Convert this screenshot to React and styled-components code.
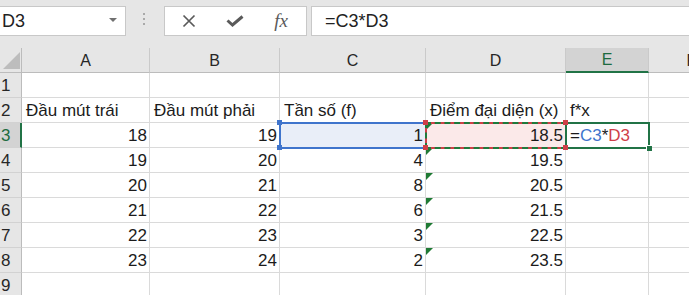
import React from 'react';
import styled, { createGlobalStyle } from 'styled-components';

const GlobalStyle = createGlobalStyle`
    html, body {
        margin: 0;
        padding: 0;
        background: #fff;
        overflow: hidden;
    }
    body {
        font-family: "Liberation Sans", Arial, sans-serif;
    }
`

const Window = styled.div`
    width: 689px;
    height: 295px;
    overflow: hidden;
    background: #fff;
    display: flex;
    flex-direction: column;
`

/* ---------- formula bar ---------- */

const Toolbar = styled.div`
    flex: none;
    height: 48px;
    box-sizing: border-box;
    padding-top: 6px;
    background: #e6e6e6;
    display: flex;
    align-items: flex-start;
`

const NameBox = styled.div`
    flex: none;
    width: 127px;
    height: 30px;
    margin-left: -1px;
    box-sizing: border-box;
    background: #fff;
    border: 1px solid #c8c8c8;
    display: flex;
    align-items: center;
    justify-content: space-between;
    padding: 0 8px 0 2px;
    font-size: 18px;
    color: #222;
`

const DropArrow = styled.span`
    width: 0;
    height: 0;
    border-left: 4px solid transparent;
    border-right: 4px solid transparent;
    border-top: 4px solid #707070;
    margin-top: -2px;
`

const Grip = styled.div`
    flex: none;
    margin: 7px 19px 0 17px;
    display: flex;
    flex-direction: column;
    gap: 3px;
`

const Dot = styled.span`
    width: 2px;
    height: 2px;
    background: #a9a9a9;
`

const ButtonBox = styled.div`
    flex: none;
    width: 143px;
    height: 30px;
    box-sizing: border-box;
    background: #fff;
    border: 1px solid #c8c8c8;
    display: flex;
    padding-left: 1px;
`

const IconSlot = styled.div`
    width: 46px;
    height: 28px;
    display: flex;
    align-items: center;
    justify-content: center;
    color: #5a5a5a;
`

const Fx = styled.span`
    font-family: "Liberation Serif", "Times New Roman", serif;
    font-style: italic;
    font-size: 19px;
    color: #5a5a5a;
    margin-top: -1px;
`

const FormulaInput = styled.div`
    flex: 1;
    height: 30px;
    margin-left: 4px;
    margin-right: -4px;
    box-sizing: border-box;
    background: #fff;
    border: 1px solid #c8c8c8;
    padding-left: 13px;
    display: flex;
    align-items: center;
    font-size: 18px;
    color: #222;
`

/* ---------- grid ---------- */

const Sheet = styled.div`
    display: grid;
    grid-template-columns: 22px 128px 130px 146px 140px 83px 86px;
    grid-auto-rows: 25px;
`

const Corner = styled.div`
    box-sizing: border-box;
    background: #e6e6e6;
    border-right: 1px solid #bcbcbc;
    border-bottom: 1px solid #bcbcbc;
`

const ColHead = styled.div`
    box-sizing: border-box;
    display: flex;
    align-items: center;
    justify-content: center;
    padding-top: 1px;
    font-size: 16px;
    background: ${p => p.$active ? '#d3d3d3' : '#e6e6e6'};
    color: ${p => p.$active ? '#1d6b3f' : '#262626'};
    border-right: 1px solid #cacaca;
    border-bottom: ${p => p.$active ? '2px solid #217346' : '1px solid #bcbcbc'};
`

const RowHead = styled.div`
    box-sizing: border-box;
    display: flex;
    align-items: flex-end;
    padding: 0 0 1px 1px;
    font-size: 17px;
    line-height: 20px;
    background: ${p => p.$active ? '#d3d3d3' : '#e6e6e6'};
    color: ${p => p.$active ? '#1d6b3f' : '#262626'};
    border-right: ${p => p.$active ? '2px solid #217346' : '1px solid #bcbcbc'};
    border-bottom: 1px solid #d2d2d2;
`

const Cell = styled.div`
    position: relative;
    box-sizing: border-box;
    display: flex;
    align-items: flex-end;
    justify-content: ${p => p.$num ? 'flex-end' : 'flex-start'};
    padding: 0 2px 1px 4px;
    font-size: 17px;
    line-height: 20px;
    color: #1b1b1b;
    white-space: nowrap;
    background: ${p => p.$fill || '#fff'};
    border-right: 1px solid #dadada;
    border-bottom: 1px solid #dadada;

    ${p => p.$flag && `
        &::before {
            content: "";
            position: absolute;
            top: 0;
            left: 0;
            width: 0;
            height: 0;
            border-top: 7px solid #1f7a34;
            border-right: 7px solid transparent;
            z-index: 1;
        }
    `}
`

const Frame = styled.span`
    position: absolute;
    z-index: 2;
    top: -1px;
    left: -1px;
    right: -2px;
    bottom: -2px;
    border: 2px ${p => p.$dashed ? 'dashed' : 'solid'} ${p => p.$color};
    pointer-events: none;
`

const Handle = styled.span`
    position: absolute;
    z-index: 3;
    width: 5px;
    height: 5px;
    background: ${p => p.$color};
    ${p => p.$v}: -3px;
    ${p => p.$h}: -3px;
`

const FillHandle = styled.span`
    position: absolute;
    z-index: 3;
    right: -4px;
    bottom: -4px;
    width: 5px;
    height: 5px;
    background: #217346;
    border-left: 1px solid #fff;
    border-top: 1px solid #fff;
`

const Ref = styled.span`
    color: ${p => p.$color};
`

const BLUE = '#3f74cc';
const RED = '#cf3f48';
const GREEN = '#217346';
const ANTS = '#1e7a3c';

const cols = ['A', 'B', 'C', 'D', 'E', 'F'];

const data = {
    2: ['Đầu mút trái', 'Đầu mút phải', 'Tần số (f)', 'Điểm đại diện (x)', 'f*x'],
    3: [18, 19, 1, 18.5],
    4: [19, 20, 4, 19.5],
    5: [20, 21, 8, 20.5],
    6: [21, 22, 6, 21.5],
    7: [22, 23, 3, 22.5],
    8: [23, 24, 2, 23.5],
};

const rows = [1, 2, 3, 4, 5, 6, 7, 8, 9];

const XIcon = () => (
    <svg width="14" height="14" viewBox="0 0 14 14">
        <path d="M1.5 1.5 L12.5 12.5 M12.5 1.5 L1.5 12.5" stroke="#5a5a5a" strokeWidth="1.7" fill="none" />
    </svg>
);

const CheckIcon = () => (
    <svg width="18" height="12" viewBox="0 0 18 12">
        <path d="M1.5 5.5 L6.5 10 L16.5 1.5" stroke="#5a5a5a" strokeWidth="3" fill="none" />
    </svg>
);

const CornerMark = () => (
    <svg width="21" height="24" viewBox="0 0 21 24">
        <polygon points="20,4 20,21 3,21" fill="#bdbdbd" />
    </svg>
);

const FormulaBar = () => (
    <Toolbar>
        <NameBox>
            <span>D3</span>
            <DropArrow />
        </NameBox>
        <Grip><Dot /><Dot /><Dot /></Grip>
        <ButtonBox>
            <IconSlot><XIcon /></IconSlot>
            <IconSlot><CheckIcon /></IconSlot>
            <IconSlot><Fx>fx</Fx></IconSlot>
        </ButtonBox>
        <FormulaInput>=C3*D3</FormulaInput>
    </Toolbar>
);

function renderCell(row, ci) {
    const key = cols[ci] + row;
    const v = data[row] ? data[row][ci] : undefined;
    const isNum = typeof v === 'number';
    const flag = ci === 3 && row >= 3 && row <= 8;

    if (key === 'C3') {
        return (
            <Cell key={key} $num $fill="#e9eef8">
                {v}
                <Frame $color={BLUE} />
                <Handle $color={BLUE} $v="top" $h="left" />
                <Handle $color={BLUE} $v="bottom" $h="left" />
            </Cell>
        );
    }
    if (key === 'D3') {
        return (
            <Cell key={key} $num $flag $fill="#fbe9e9">
                {v}
                <Frame $color={RED} />
                <Frame $color={ANTS} $dashed />
                <Handle $color={RED} $v="top" $h="left" />
                <Handle $color={RED} $v="bottom" $h="left" />
                <Handle $color={RED} $v="top" $h="right" />
                <Handle $color={RED} $v="bottom" $h="right" />
            </Cell>
        );
    }
    if (key === 'E3') {
        return (
            <Cell key={key}>
                <span>=<Ref $color={BLUE}>C3</Ref>*<Ref $color={RED}>D3</Ref></span>
                <Frame $color={GREEN} />
                <FillHandle />
            </Cell>
        );
    }
    return (
        <Cell key={key} $num={isNum} $flag={flag}>
            {v}
        </Cell>
    );
}

export default function App() {
    return (
        <Window>
            <GlobalStyle />
            <FormulaBar />
            <Sheet>
                <Corner><CornerMark /></Corner>
                {cols.map(c => (
                    <ColHead key={c} $active={c === 'E'}>{c}</ColHead>
                ))}
                {rows.map(r => (
                    <React.Fragment key={r}>
                        <RowHead $active={r === 3}>{r}</RowHead>
                        {cols.map((c, ci) => renderCell(r, ci))}
                    </React.Fragment>
                ))}
            </Sheet>
        </Window>
    );
}
